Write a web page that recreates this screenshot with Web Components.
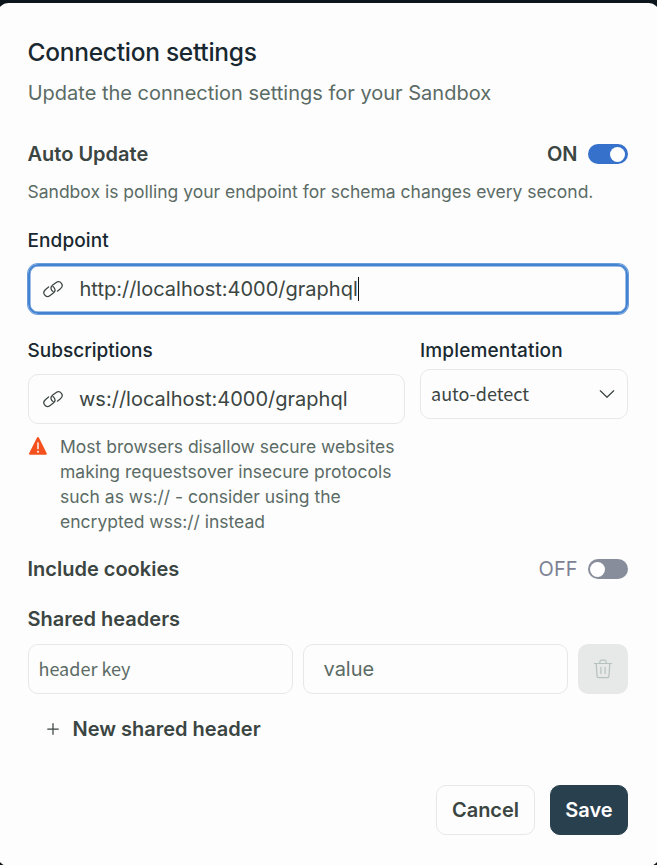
<!DOCTYPE html>
<html lang="en">
<head>
<meta charset="utf-8">
<title>Connection settings</title>
<style>
html, body { margin: 0; height: 100%; overflow: hidden; background: #0c151b; }
body { font-family: Inter, "Liberation Sans", sans-serif; font-size: 20px; line-height: 25px; color: #3b4542; }
</style>
</head>
<body>
<settings-dialog></settings-dialog>
<script>
const define = (name, html) => customElements.define(name, class extends HTMLElement {
  constructor() {
    super();
    this.attachShadow({ mode: 'open' }).innerHTML = html;
  }
});

define('link-icon', `<style>:host{display:block;width:20px;height:20px;flex:none}svg{display:block}</style>
<svg width="20" height="20" viewBox="0 0 20 20" fill="none" stroke="#3b4542" stroke-width="1.25" stroke-linecap="round" stroke-linejoin="round">
<path d="M5.6 8L2.6 10.4C.7 12 .3 14.2 1.6 15.9C2.9 17.6 5.2 17.9 7.1 16.5L10.3 14.1C12.1 12.7 12.4 10.5 11.2 8.8C10.9 8.3 10.5 7.9 9.9 7.7"/>
<path d="M14.4 12.2L17.4 9.8C19.3 8.2 19.7 6 18.4 4.3C17.1 2.6 14.8 2.3 12.9 3.7L9.7 6.1C7.9 7.5 7.6 9.7 8.8 11.4C9.1 11.9 9.5 12.3 10.1 12.5"/></svg>`);

define('warning-icon', `<style>:host{display:block;width:20px;flex:none;padding-top:2px}svg{display:block}</style>
<svg width="20" height="20" viewBox="0 0 20 20"><path d="M9.9 1.1C10.5 1.1 10.8 1.4 11.1 1.9L18.7 17.3C19 18.1 18.6 18.7 17.8 18.7H2.1C1.2 18.7.8 18.1 1.1 17.3L8.8 1.9C9 1.4 9.3 1.1 9.9 1.1Z" fill="#f4511e"/><path d="M10 7V12.6" stroke="#fdeee8" stroke-width="1.6" stroke-linecap="round"/><circle cx="10" cy="15.7" r="1.05" fill="#fdeee8"/></svg>`);

define('chevron-icon', `<style>:host{display:block;flex:none}svg{display:block}</style>
<svg width="16" height="10" viewBox="0 0 16 10" fill="none" stroke="#3b4542" stroke-width="1.25" stroke-linecap="round" stroke-linejoin="round"><path d="M1.3 1.8L8 8.3L14.7 1.8"/></svg>`);

define('plus-icon', `<style>:host{display:block;flex:none;margin-top:-1px}svg{display:block}</style>
<svg width="12" height="12" viewBox="0 0 12 12" fill="none" stroke="#3b4542" stroke-width="1.25" stroke-linecap="round"><path d="M6 .7V11.3M.7 6H11.3"/></svg>`);

define('trash-button', `<style>:host{display:flex;width:50px;height:50px;flex:none;align-items:center;justify-content:center;background:#e7e9e8;border-radius:10px}svg{display:block}</style>
<svg width="20" height="20" viewBox="0 0 20 20" fill="none" stroke="#b6c2be" stroke-width="1.2" stroke-linecap="round" stroke-linejoin="round"><path d="M1.4 4.5H18.6M3.2 4.5L4.1 17.4C4.2 18.3 4.7 18.7 5.5 18.7H14.5C15.3 18.7 15.8 18.3 15.9 17.4L16.8 4.5M6.7 4.5L7 2.4C7.1 1.6 7.6 1.2 8.3 1.2H11.7C12.4 1.2 12.9 1.6 13 2.4L13.3 4.5M7.9 8.4V14.6M12.1 8.4V14.6"/></svg>`);

define('toggle-switch', `<style>
:host{display:flex;align-items:center;gap:10.5px;color:#7c8294}
:host([on]){font-weight:600;color:#3b4542}
i{display:flex;box-sizing:border-box;width:40px;height:20px;margin-top:-1px;padding:2.5px 2px;border-radius:10px;background:#878d9b}
i::before{content:"";width:15px;height:15px;border-radius:50%;background:#fff}
:host([on]) i{background:#3671cb;justify-content:flex-end;padding-right:3px}
</style><span><slot></slot></span><i></i>`);

define('section-label', `<style>:host{display:block;height:25px;font-weight:500;font-size:19px;letter-spacing:var(--track,0);text-indent:var(--indent,-.5px);color:#192830;white-space:nowrap}</style><slot></slot>`);

define('text-field', `<style>
:host{display:flex;box-sizing:border-box;height:50px;align-items:center;border:1px solid #e6e8e7;border-radius:10px;padding:0 14px 0 14px;white-space:nowrap}
:host([focused]){border:2px solid #4282d1;padding:0 13px;box-shadow:0 0 0 1px #6b9fdb,inset 0 0 0 .5px #4282d1}
:host([placeholder]){color:#5b6b65}
:host([narrow]){font-family:"Noto Sans CJK SC",sans-serif;font-size:18px;padding:0 10px}
:host([narrow][placeholder]){padding:0 9.5px}
:host([narrow]) .value{margin-top:-1px}
.value{flex:1;display:flex;align-items:center}
:host([focused]) .value{padding-left:.5px}
::slotted([slot=lead]){margin-right:16px}
.caret{display:none;width:1px;height:24px;background:#111}
:host([focused]) .caret{display:block}
</style><slot name="lead"></slot><span class="value"><slot></slot><span class="caret"></span></span><slot name="trail"></slot>`);

define('action-button', `<style>
:host{display:flex;box-sizing:border-box;height:50px;align-items:center;justify-content:center;border:1px solid #e6e8e7;border-radius:10px;font-weight:600}
:host([primary]){background:#29404e;border-color:#29404e;color:#fff}
</style><slot></slot>`);

define('settings-dialog', `<style>
:host{display:block;padding-top:3px}
main{box-sizing:border-box;height:863px;margin:0 -2px;padding:34px 31px 0 30px;background:#fdfdfd;border-radius:10px}
h1{margin:0;font-size:24.5px;line-height:30px;font-weight:500;letter-spacing:-.27px;text-indent:-.5px;color:#192830}
.sub{margin-top:14px;text-indent:-.3px;color:#5b6b65}
.row{display:flex;justify-content:space-between;font-weight:600}
.row > span{text-indent:-.5px}
.row toggle-switch:not([on]){font-weight:400}
.note{font-size:17.5px;color:#5b6b65}
.columns{display:grid;grid-template-columns:377px 208px;gap:15px;margin-top:24px}
.warning{display:flex;gap:12px;margin-top:10px}
.headers{display:grid;grid-template-columns:265px 265px 50px;gap:10px;margin-top:12px}
.add{display:flex;align-items:center;gap:13.5px;margin-top:23px;padding-left:19px;font-weight:600}
footer{display:flex;justify-content:flex-end;gap:15px;margin-top:43px}
</style>
<main>
<h1>Connection settings</h1>
<div class="sub">Update the connection settings for your Sandbox</div>
<div class="row" style="margin-top:36px"><span>Auto Update</span><toggle-switch on>ON</toggle-switch></div>
<div class="note" style="margin-top:12px;text-indent:-.5px">Sandbox is polling your endpoint for schema changes every second.</div>
<section-label style="margin-top:24px;--track:.1px">Endpoint</section-label>
<text-field focused style="margin-top:11px"><link-icon slot="lead"></link-icon>http://localhost:4000/graphql</text-field>
<div class="columns">
<div><section-label>Subscriptions</section-label>
<text-field style="margin-top:11px"><link-icon slot="lead"></link-icon>ws://localhost:4000/graphql</text-field>
<div class="warning note"><warning-icon></warning-icon><div>Most browsers disallow secure websites<br>making requestsover insecure protocols<br>such as ws:// - consider using the<br>encrypted wss:// instead</div></div></div>
<div><section-label style="--track:.15px;--indent:0px">Implementation</section-label>
<text-field narrow style="margin-top:6px;padding-right:12px">auto-detect<chevron-icon slot="trail"></chevron-icon></text-field></div>
</div>
<div class="row" style="margin-top:23px"><span>Include cookies</span><toggle-switch>OFF</toggle-switch></div>
<div class="row" style="margin-top:25px"><span>Shared headers</span></div>
<div class="headers"><text-field narrow placeholder>header key</text-field><text-field placeholder style="padding-left:19.5px">value</text-field><trash-button></trash-button></div>
<div class="add"><plus-icon></plus-icon><span>New shared header</span></div>
<footer><action-button style="width:99px">Cancel</action-button><action-button primary style="width:78px">Save</action-button></footer>
</main>`);
</script>
</body>
</html>
